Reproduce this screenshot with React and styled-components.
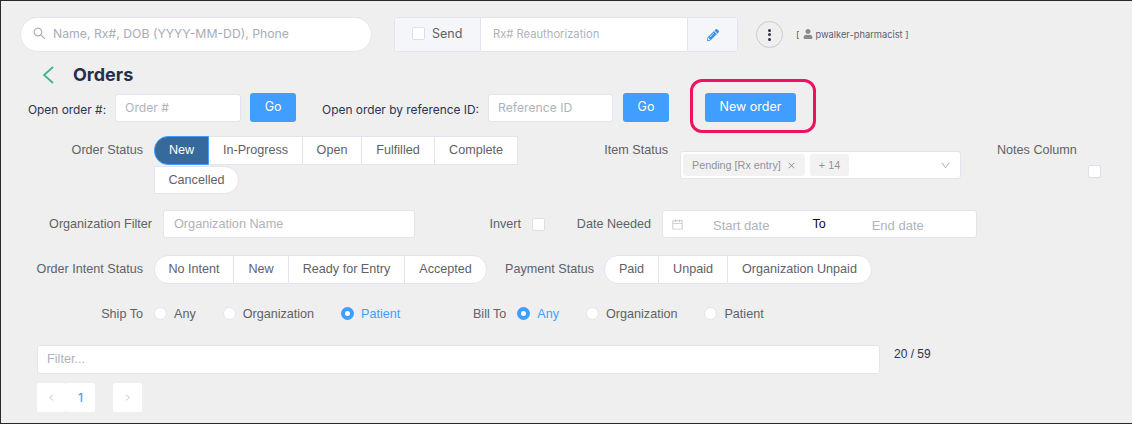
import styled, { createGlobalStyle } from "styled-components";
import { FaPencilAlt, FaUser } from "react-icons/fa";
import {
  AiOutlineCalendar,
  AiOutlineClose,
  AiOutlineDown,
  AiOutlineLeft,
  AiOutlineRight,
  AiOutlineSearch,
} from "react-icons/ai";

const GlobalStyle = createGlobalStyle`
  html, body {
    margin: 0;
    padding: 0;
    background: #efefef;
  }
  * {
    box-sizing: border-box;
  }
`;

const Page = styled.div`
  width: 1132px;
  height: 424px;
  overflow: hidden;
  background: #efefef;
  border-top: 1px solid #2a2a2a;
  border-bottom: 1px solid #2a2a2a;
  border-left: 1px solid #2a2a2a;
  font-family: "Liberation Sans", Arial, sans-serif;
  font-size: 12.6px;
  color: #606266;
`;

const Row = styled.div`
  display: flex;
  align-items: ${({ $align }) => $align || "center"};
  margin-top: ${({ $top }) => $top || 0}px;
  padding-left: ${({ $left }) => $left || 0}px;
`;

const Label = styled.label`
  flex: none;
  width: ${({ $w }) => $w}px;
  margin-left: ${({ $ml }) => $ml || 0}px;
  margin-right: ${({ $mr }) => $mr ?? 11}px;
  text-align: right;
  white-space: nowrap;
  line-height: 28px;
`;

const Search = styled.div`
  width: 352px;
  height: 35px;
  display: flex;
  align-items: center;
  gap: 6px;
  padding: 0 0 2px 11px;
  background: #fff;
  border: 1px solid #e2e5ee;
  border-radius: 18px;
  color: #a9acb4;
  font-family: Inter, sans-serif;
  font-size: 12.25px;
  svg {
    font-size: 15px;
  }
`;

const SendGroup = styled.div`
  width: 344px;
  height: 35px;
  margin-left: 22px;
  display: flex;
  background: #fff;
  border: 1px solid #e2e5ee;
  border-radius: 3px;
  font-family: Inter, sans-serif;
`;

const SendAddon = styled.div`
  width: 86px;
  display: flex;
  align-items: center;
  gap: 7px;
  padding: 0 0 2px 17px;
  background: #f5f6fa;
  border-right: 1px solid #e2e5ee;
  color: #5c5f68;
  font-size: 12.5px;
`;

const SendInput = styled.div`
  flex: 1;
  display: flex;
  align-items: center;
  padding: 0 0 1px 12px;
  color: #b0b3ba;
  font-size: 11.2px;
`;

const PencilAddon = styled.div`
  width: 50px;
  display: flex;
  align-items: center;
  justify-content: center;
  background: #f5f6fa;
  border-left: 1px solid #e2e5ee;
  color: #3f8fe8;
  font-size: 12px;
`;

const Box = styled.span`
  flex: none;
  display: inline-block;
  width: 13px;
  height: 13px;
  background: #fff;
  border: 1px solid #dcdfe8;
  border-radius: 2px;
`;

const Kebab = styled.div`
  width: 27px;
  height: 27px;
  margin-left: 18px;
  display: flex;
  flex-direction: column;
  align-items: center;
  justify-content: center;
  gap: 1.5px;
  border: 1px solid #c9c9cc;
  border-radius: 50%;
  i {
    width: 3px;
    height: 3px;
    border-radius: 50%;
    background: #2b3350;
  }
`;

const User = styled.div`
  margin-left: 13px;
  padding-bottom: 1px;
  display: flex;
  align-items: center;
  gap: 2px;
  font-family: Inter, sans-serif;
  font-size: 9.3px;
  color: #5b5f6b;
  svg {
    color: #8a8a8a;
    font-size: 10px;
    margin: 0 0 0 2px;
  }
`;

const Heading = styled.h1`
  margin: 0 0 0 19px;
  font-family: Inter, sans-serif;
  font-size: 18px;
  font-weight: 700;
  line-height: 20px;
  color: #252f4a;
`;

const Back = styled.svg`
  width: 12px;
  height: 18px;
  fill: none;
  stroke: #3db585;
  stroke-width: 1.7;
`;

const OpenLabel = styled.span`
  flex: none;
  margin-left: ${({ $ml }) => $ml || 0}px;
  margin-right: 9px;
  padding-top: 4px;
  font-family: Inter, sans-serif;
  font-size: 11.9px;
  color: #2c3350;
`;

const TextInput = styled.div`
  flex: none;
  width: ${({ $w }) => $w}px;
  height: ${({ $h }) => $h || 28}px;
  margin-left: ${({ $ml }) => $ml || 0}px;
  display: flex;
  align-items: center;
  padding-left: ${({ $pl }) => $pl || 10}px;
  background: #fff;
  border: 1px solid #e2e5ee;
  border-radius: 3px;
  color: #b0b3ba;
  font-family: ${({ $inter }) => ($inter ? "Inter, sans-serif" : "inherit")};
  font-size: ${({ $inter }) => ($inter ? 12.2 : 12.7)}px;
`;

const BlueButton = styled.button`
  flex: none;
  width: ${({ $w }) => $w}px;
  height: 29px;
  margin-left: ${({ $ml }) => $ml || 0}px;
  padding: 0 0 2px;
  border: 0;
  border-radius: 3px;
  background: #409eff;
  color: #fff;
  font-family: Inter, sans-serif;
  font-size: 12.5px;
`;

const Highlight = styled.div`
  position: relative;
  margin-left: 36px;
  display: flex;
  &::after {
    content: "";
    position: absolute;
    inset: -14px -20px -11px -15px;
    border: 3px solid #ee1262;
    border-radius: 12px;
    pointer-events: none;
  }
`;

const Segments = styled.div`
  display: flex;
  flex-wrap: wrap;
  flex: none;
  width: ${({ $w }) => $w}px;
  row-gap: 1px;
`;

const Segment = styled.div`
  flex: none;
  width: ${({ $w }) => $w}px;
  height: ${({ $h }) => $h || 28.5}px;
  display: flex;
  align-items: center;
  justify-content: center;
  margin-left: ${({ $wrapped }) => ($wrapped ? 0 : -1)}px;
  background: ${({ $active }) => ($active ? "#366a9c" : "#fff")};
  border: 1px solid ${({ $active }) => ($active ? "#409eff" : "#e2e5ee")};
  border-radius: ${({ $l, $r }) =>
    `${$l ? 14 : 0}px ${$r ? 14 : 0}px ${$r ? 14 : 0}px ${$l ? 14 : 0}px`};
  color: ${({ $active }) => ($active ? "#fff" : "#606266")};
  position: ${({ $active }) => ($active ? "relative" : "static")};
  white-space: nowrap;
  &:first-child {
    margin-left: 0;
  }
`;

const Select = styled.div`
  flex: none;
  width: 281px;
  height: 28px;
  margin-top: 15px;
  display: flex;
  align-items: center;
  gap: 5px;
  padding: 0 9px 0 2px;
  background: #fff;
  border: 1px solid #e2e5ee;
  border-radius: 3px;
  font-size: 10.8px;
  color: #8f929a;
  > svg {
    margin-left: auto;
    font-size: 11px;
    color: #b0b3ba;
  }
`;

const Tag = styled.span`
  flex: none;
  height: 22px;
  display: flex;
  align-items: center;
  gap: 6px;
  padding: 0 9px;
  background: #f2f2f3;
  border-radius: 3px;
  svg {
    font-size: 9px;
  }
`;

const NotesColumn = styled.div`
  flex: none;
  margin-left: 36px;
  display: flex;
  flex-direction: column;
  width: 104px;
  line-height: 28px;
  ${Box} {
    margin-top: 1px;
    align-self: flex-end;
  }
`;

const InvertBox = styled(Box)`
  margin-left: 11px;
`;

const DateRange = styled.div`
  flex: none;
  width: 315px;
  height: 28px;
  display: flex;
  align-items: center;
  padding-left: 8px;
  background: #fff;
  border: 1px solid #e2e5ee;
  border-radius: 3px;
  color: #b0b3ba;
  font-size: 13px;
  svg {
    font-size: 13px;
    color: #c3c5cb;
  }
`;

const DateText = styled.span`
  margin-left: ${({ $ml }) => $ml}px;
  padding-top: ${({ $dark }) => ($dark ? 0 : 2)}px;
  font-size: ${({ $dark }) => ($dark ? 12.6 : 13)}px;
  color: ${({ $dark }) => ($dark ? "#111" : "inherit")};
`;

const Radio = styled.span`
  flex: none;
  width: 13px;
  height: 13px;
  margin-left: ${({ $ml }) => $ml || 0}px;
  margin-right: 7px;
  display: inline-block;
  background: #fff;
  border: ${({ $on }) => ($on ? "4.5px solid #409eff" : "1px solid #e2e5ee")};
  border-radius: 50%;
`;

const RadioText = styled.span`
  flex: none;
  color: ${({ $on }) => ($on ? "#409eff" : "#606266")};
`;

const Count = styled.span`
  margin-left: 14px;
  align-self: flex-start;
  line-height: 18px;
  font-size: 12px;
  color: #2c3350;
`;

const Pager = styled.div`
  display: flex;
  margin-top: 9px;
  margin-left: 36px;
`;

const PageItem = styled.div`
  width: 29px;
  height: 29px;
  margin-left: ${({ $ml }) => $ml || 0}px;
  display: flex;
  align-items: center;
  justify-content: center;
  background: #fff;
  border-radius: 2px;
  font-family: Inter, sans-serif;
  font-weight: 500;
  font-size: 12px;
  color: ${({ $current }) => ($current ? "#409eff" : "#c4c6cc")};
  svg {
    font-size: 9px;
  }
`;

const orderStatus = [
  { text: "New", w: 55, active: true, l: true },
  { text: "In-Progress", w: 95 },
  { text: "Open", w: 60 },
  { text: "Fulfilled", w: 74 },
  { text: "Complete", w: 84 },
  { text: "Cancelled", w: 85, r: true, wrapped: true },
];

const intentStatus = [
  { text: "No Intent", w: 80, l: true },
  { text: "New", w: 56 },
  { text: "Ready for Entry", w: 117 },
  { text: "Accepted", w: 83, r: true },
];

const paymentStatus = [
  { text: "Paid", w: 55, l: true },
  { text: "Unpaid", w: 70 },
  { text: "Organization Unpaid", w: 145, r: true },
];

const renderSegments = (items) =>
  items.map(({ text, w, active, l, r, wrapped }) => (
    <Segment key={text} $w={w} $active={active} $l={l} $r={r} $wrapped={wrapped}>
      {text}
    </Segment>
  ));

export default function App() {
  return (
    <Page>
      <GlobalStyle />
      <Row $top={16} $left={19}>
        <Search>
          <AiOutlineSearch />
          Name, Rx#, DOB (YYYY-MM-DD), Phone
        </Search>
        <SendGroup>
          <SendAddon>
            <Box />
            Send
          </SendAddon>
          <SendInput>Rx# Reauthorization</SendInput>
          <PencilAddon>
            <FaPencilAlt />
          </PencilAddon>
        </SendGroup>
        <Kebab>
          <i />
          <i />
          <i />
        </Kebab>
        <User>
          [ <FaUser /> pwalker-pharmacist ]
        </User>
      </Row>

      <Row $top={13} $left={41}>
        <Back viewBox="0 0 12 18">
          <path d="M11 1 L2 9 L11 17" />
        </Back>
        <Heading>Orders</Heading>
      </Row>

      <Row $top={8} $left={27}>
        <OpenLabel>Open order #:</OpenLabel>
        <TextInput $w={126} $pl={9} $inter>Order #</TextInput>
        <BlueButton $w={46} $ml={9}>Go</BlueButton>
        <OpenLabel $ml={26}>Open order by reference ID:</OpenLabel>
        <TextInput $w={125} $pl={9} $inter>Reference ID</TextInput>
        <BlueButton $w={46} $ml={10}>Go</BlueButton>
        <Highlight>
          <BlueButton $w={91}>New order</BlueButton>
        </Highlight>
      </Row>

      <Row $top={14} $left={0} $align="flex-start">
        <Label $w={142}>Order Status</Label>
        <Segments $w={365}>{renderSegments(orderStatus)}</Segments>
        <Label $w={80} $ml={69} $mr={12}>Item Status</Label>
        <Select>
          <Tag>
            Pending [Rx entry] <AiOutlineClose />
          </Tag>
          <Tag>+ 14</Tag>
          <AiOutlineDown />
        </Select>
        <NotesColumn>
          Notes Column
          <Box />
        </NotesColumn>
      </Row>

      <Row $top={16} $left={0}>
        <Label $w={151}>Organization Filter</Label>
        <TextInput $w={252}>Organization Name</TextInput>
        <Label $w={106} $mr={0}>Invert</Label>
        <InvertBox />
        <Label $w={106} $ml={0}>Date Needed</Label>
        <DateRange>
          <AiOutlineCalendar />
          <DateText $ml={29}>Start date</DateText>
          <DateText $ml={43} $dark>To</DateText>
          <DateText $ml={46}>End date</DateText>
        </DateRange>
      </Row>

      <Row $top={17} $left={0}>
        <Label $w={142}>Order Intent Status</Label>
        <Segments $w={334}>{renderSegments(intentStatus)}</Segments>
        <Label $w={106} $mr={10}>Payment Status</Label>
        <Segments $w={268}>{renderSegments(paymentStatus)}</Segments>
      </Row>

      <Row $top={16} $left={0}>
        <Label $w={142}>Ship To</Label>
        <Radio />
        <RadioText>Any</RadioText>
        <Radio $ml={27} />
        <RadioText>Organization</RadioText>
        <Radio $on $ml={27} />
        <RadioText $on>Patient</RadioText>
        <Label $w={106} $mr={11}>Bill To</Label>
        <Radio $on />
        <RadioText $on>Any</RadioText>
        <Radio $ml={27} />
        <RadioText>Organization</RadioText>
        <Radio $ml={27} />
        <RadioText>Patient</RadioText>
      </Row>

      <Row $top={17} $left={36}>
        <TextInput $w={843} $h={29} $pl={9}>Filter...</TextInput>
        <Count>20 / 59</Count>
      </Row>

      <Pager>
        <PageItem>
          <AiOutlineLeft />
        </PageItem>
        <PageItem $current>1</PageItem>
        <PageItem $ml={18}>
          <AiOutlineRight />
        </PageItem>
      </Pager>
    </Page>
  );
}
